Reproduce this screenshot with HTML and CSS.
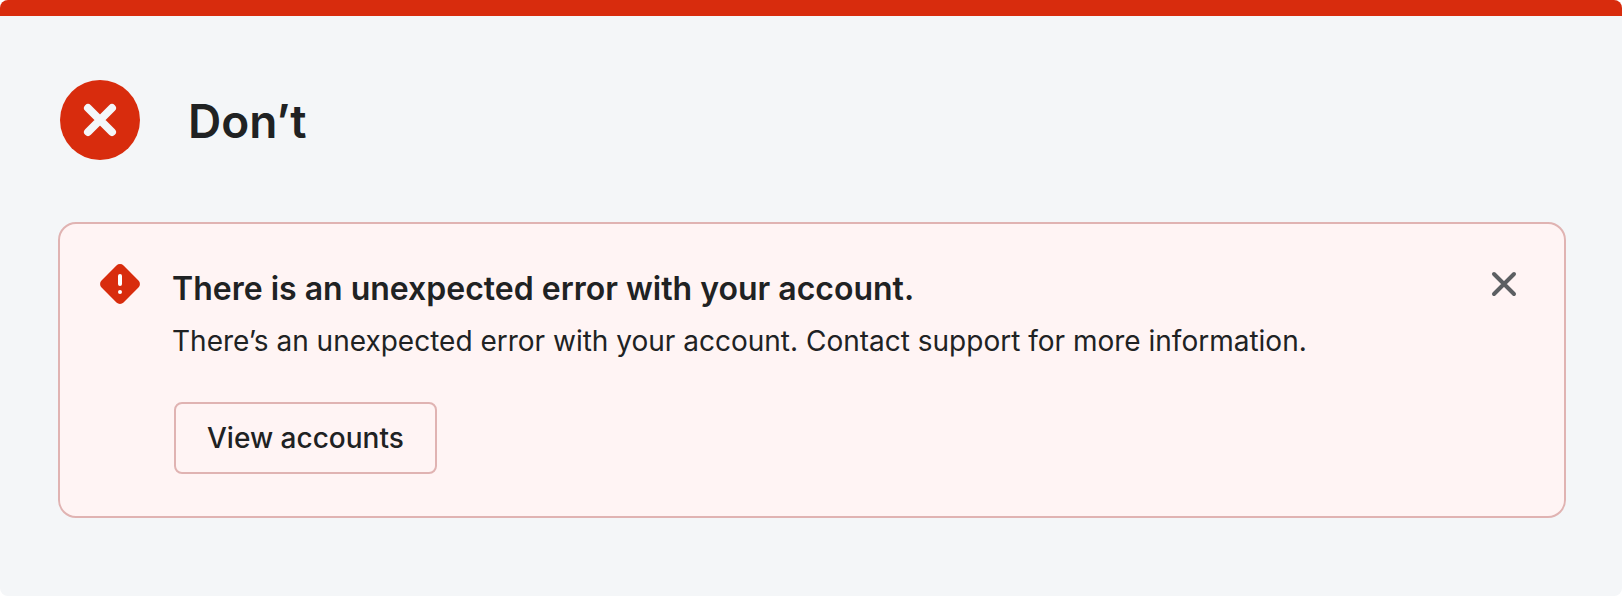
FILE: index.html
```html
<!DOCTYPE html>
<html lang="en">
<head>
<meta charset="utf-8">
<title>Don’t</title>
<link rel="stylesheet" href="styles.css">
</head>
<body>
<main class="example">
  <header class="example-header">
    <svg class="example-icon" viewBox="0 0 80 80" aria-hidden="true">
      <circle cx="40" cy="40" r="40" fill="#d82c0d"/>
      <path d="M28 28 52 52M52 28 28 52" stroke="#f4f6f8" stroke-width="8" stroke-linecap="round"/>
    </svg>
    <h1 class="example-title">Don’t</h1>
  </header>
  <section class="banner" aria-labelledby="banner-title">
    <svg class="banner-icon" viewBox="0 0 20 20" aria-hidden="true">
      <path fill="#d82c0d" d="M11.768.768a2.500 2.500 0 0 0-3.536 0L.768 8.232a2.500 2.500 0 0 0 0 3.536l7.464 7.464a2.500 2.500 0 0 0 3.536 0l7.464-7.464a2.500 2.500 0 0 0 0-3.536L11.768.768z"/>
      <path d="M10 6v4" stroke="#fff" stroke-width="2" stroke-linecap="round"/>
      <circle cx="10" cy="14" r="1" fill="#fff"/>
    </svg>
    <div class="banner-body">
      <h2 class="banner-title" id="banner-title">There is an unexpected error with your account.</h2>
      <p class="banner-text">There’s an unexpected error with your account. Contact support for more information.</p>
      <button class="banner-action" type="button">View accounts</button>
    </div>
    <button class="banner-close" type="button" aria-label="Dismiss">
      <svg class="close-icon" viewBox="0 0 40 40" aria-hidden="true">
        <path d="M10 10 30 30M30 10 10 30" stroke="#5c5f62" stroke-width="4" stroke-linecap="round"/>
      </svg>
    </button>
  </section>
</main>
</body>
</html>
```
FILE: styles.css
```css
* { box-sizing: border-box; }
body { margin: 0; background: #fff; color: #202223; font-family: Inter, "Liberation Sans", sans-serif; }
.example { min-height: 100vh; padding: 64px 56px 64px 58px; border-top: 16px solid #d82c0d; border-radius: 8px; background: #f4f6f8; }
.example-header { display: flex; align-items: center; gap: 48px; padding-left: 2px; }
.example-icon { width: 80px; height: 80px; }
.example-title { margin: 0; padding-top: 2px; font-size: 46px; line-height: 56px; font-weight: 600; }
.banner { display: flex; align-items: flex-start; margin-top: 62px; padding: 40px 40px 42px; border: 2px solid #e0b3b2; border-radius: 18px; background: #fff4f4; }
.banner-icon { flex: none; width: 40px; height: 40px; margin-right: 32px; }
.banner-body { flex: 1; }
.banner-title { margin: 0; padding-top: 5px; font-size: 32px; line-height: 40px; font-weight: 600; }
.banner-text { margin: 12px 0 41px; font-size: 28px; line-height: 40px; }
.banner-action { display: block; margin-left: 2px; padding: 14px 31px; border: 2px solid #e0b3b2; border-radius: 8px; background: none; color: inherit; font: 500 28px/40px Inter, "Liberation Sans", sans-serif; }
.banner-close { flex: none; padding: 0; border: 0; background: none; }
.close-icon { display: block; width: 40px; height: 40px; }
```
